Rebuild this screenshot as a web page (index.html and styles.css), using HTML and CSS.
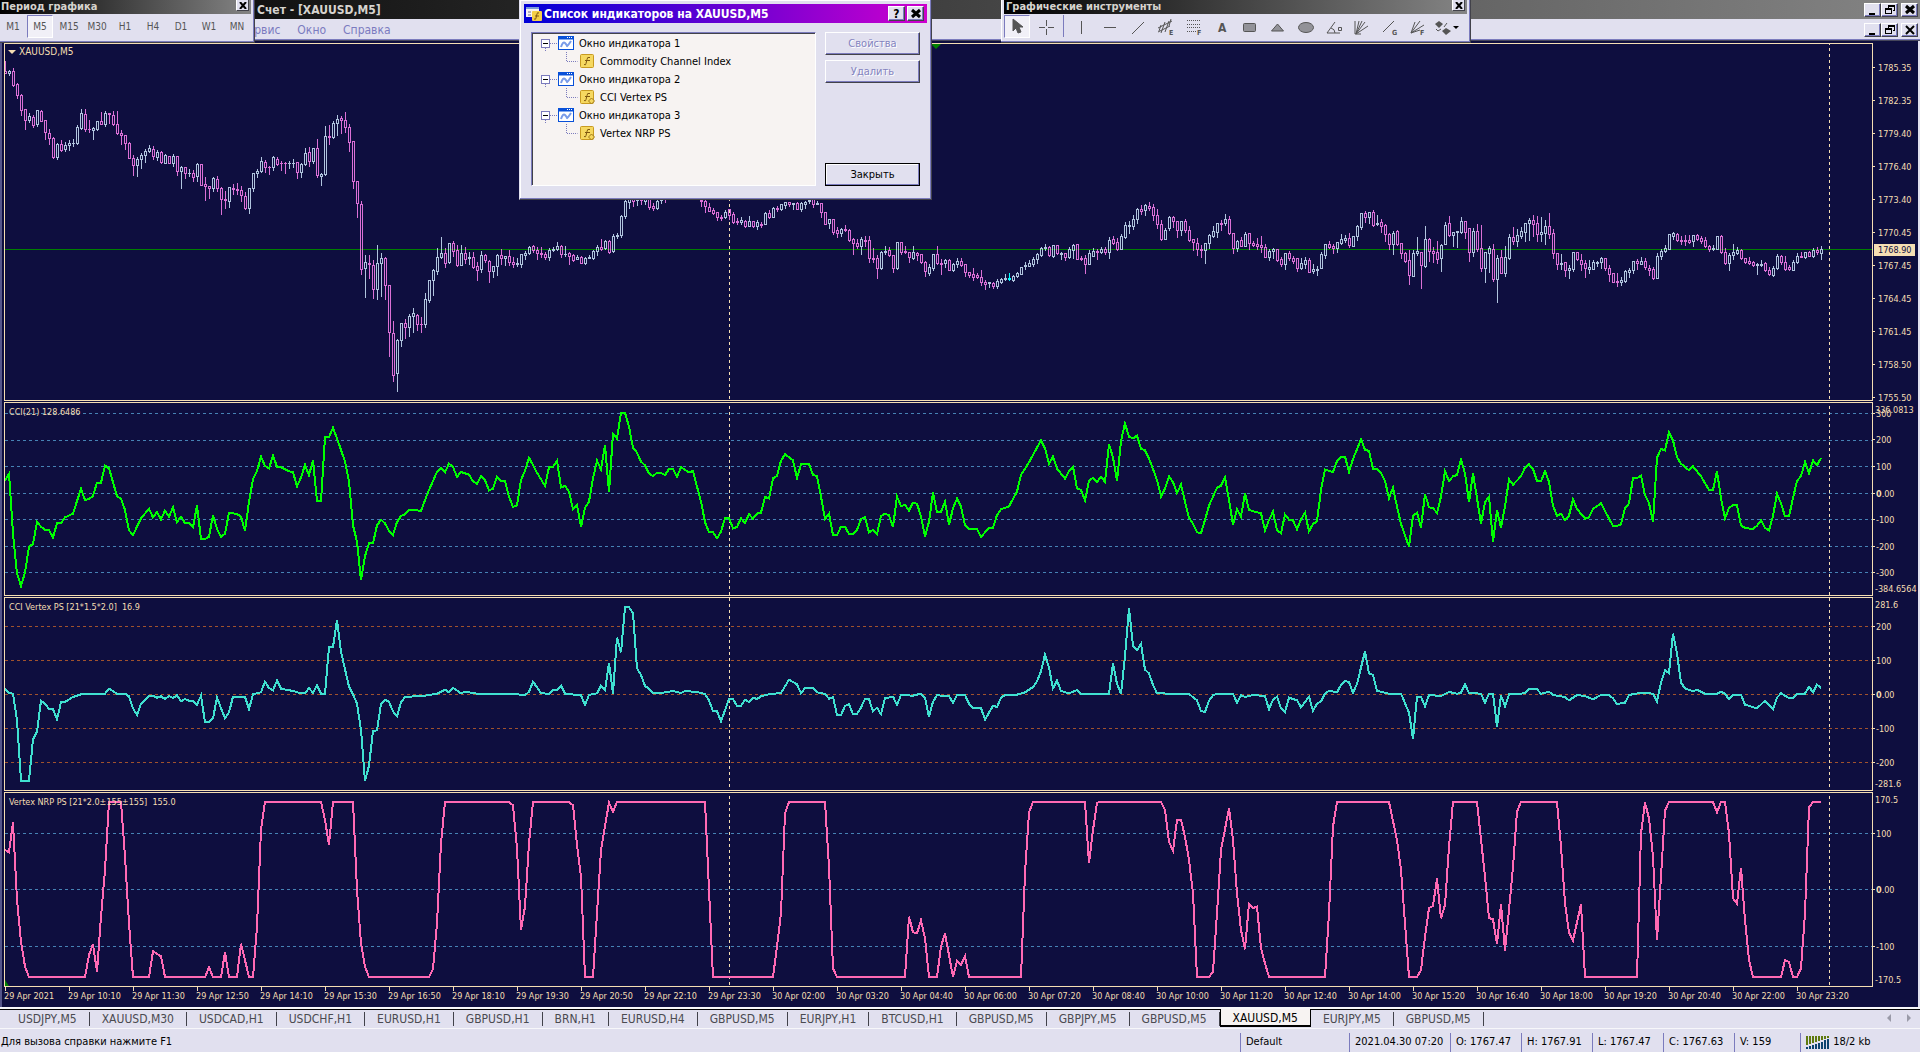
FILE: index.html
```html
<!DOCTYPE html>
<html lang="ru">
<head>
  <meta charset="UTF-8">
  <title>Счет - [XAUUSD,M5]</title>
  <meta name="viewport" content="width=device-width, initial-scale=1">
  <link rel="stylesheet" href="styles.css">
</head>
<body>
  <header class="titlebar">
    <h1>Счет - [XAUUSD,M5]</h1>
    <div class="winbuttons">
      <button class="winbtn" aria-label="Свернуть"><svg width="12" height="11"><path d="M2 9h6v2H2z"/></svg></button>
      <button class="winbtn" aria-label="Восстановить"><svg width="12" height="11"><path d="M4 1h7v6H9V6h1V3H5v1H4zM1 4h7v6H1zm1 2v3h5V6z" fill-rule="evenodd"/></svg></button>
      <button class="winbtn last" aria-label="Закрыть"><svg width="12" height="11"><path d="M2 2l8 7M10 2l-8 7" stroke="#000" stroke-width="3"/></svg></button>
    </div>
  </header>

  <nav class="menubar">
    <a href="#">Сервис</a>
    <a href="#">Окно</a>
    <a href="#">Справка</a>
    <div class="winbuttons">
      <button class="winbtn" aria-label="Свернуть окно"><svg width="12" height="11"><path d="M2 9h6v2H2z"/></svg></button>
      <button class="winbtn" aria-label="Восстановить окно"><svg width="12" height="11"><path d="M4 1h7v6H9V6h1V3H5v1H4zM1 4h7v6H1zm1 2v3h5V6z" fill-rule="evenodd"/></svg></button>
      <button class="winbtn last" aria-label="Закрыть окно"><svg width="12" height="11"><path d="M2 2l8 8M10 2l-8 8" stroke="#000" stroke-width="2"/></svg></button>
    </div>
  </nav>

  <main class="chart">
    <section class="pane price">
      <div class="plot">
        <svg id="price" viewBox="0 44 1867 356" preserveAspectRatio="none"></svg>
        <span class="caption symbol">XAUUSD,M5</span>
        <span class="shift"></span>
      </div>
      <div class="axis" id="priceAxis"></div>
    </section>
    <section class="pane">
      <div class="plot">
        <svg id="cci" viewBox="0 9 1867 576" preserveAspectRatio="none"></svg>
        <span class="caption">CCI(21) 128.6486</span>
      </div>
      <div class="axis" id="cciAxis"></div>
    </section>
    <section class="pane">
      <div class="plot">
        <svg id="vertex" viewBox="0 594 1867 576" preserveAspectRatio="none"></svg>
        <span class="caption">CCI Vertex PS [21*1.5*2.0]&nbsp; 16.9</span>
      </div>
      <div class="axis" id="vertexAxis"></div>
    </section>
    <section class="pane nrp">
      <div class="plot">
        <svg id="nrp" viewBox="0 9 1867 579" preserveAspectRatio="none"></svg>
        <span class="caption">Vertex NRP PS [21*2.0±155±155]&nbsp; 155.0</span>
        <span class="corner"></span>
      </div>
      <div class="axis" id="nrpAxis"></div>
    </section>
    <div class="times" id="times"></div>
  </main>

  <nav class="tabs">
    <a href="#">USDJPY,M5</a>
    <a href="#">XAUUSD,M30</a>
    <a href="#">USDCAD,H1</a>
    <a href="#">USDCHF,H1</a>
    <a href="#">EURUSD,H1</a>
    <a href="#">GBPUSD,H1</a>
    <a href="#">BRN,H1</a>
    <a href="#">EURUSD,H4</a>
    <a href="#">GBPUSD,M5</a>
    <a href="#">EURJPY,H1</a>
    <a href="#">BTCUSD,H1</a>
    <a href="#">GBPUSD,M5</a>
    <a href="#">GBPJPY,M5</a>
    <a href="#">GBPUSD,M5</a>
    <a href="#" class="active">XAUUSD,M5</a>
    <a href="#">EURJPY,M5</a>
    <a href="#">GBPUSD,M5</a>
    <div class="scroll">
      <svg width="32" height="10"><path d="M7 1v8L3 5zM23 1v8l4-4z" fill="#9a9aa8"/></svg>
    </div>
  </nav>

  <footer class="status">
    <span class="hint">Для вызова справки нажмите F1</span>
    <span class="wide">Default</span>
    <span class="date">2021.04.30 07:20</span>
    <span>O: 1767.47</span>
    <span>H: 1767.91</span>
    <span>L: 1767.47</span>
    <span>C: 1767.63</span>
    <span class="volume">V: 159</span>
    <span class="traffic">
      <svg width="24" height="14">
        <path d="M1 1v9M4 1v8M7 1v7M10 1v6M13 1v5M16 1v4M19 1v3M22 1v2" stroke="#5f7a10" stroke-width="2"/>
        <path d="M1 12v2M4 11v3M7 10v4M10 9v5M13 8v6M16 7v7M19 5v9M22 4v10" stroke="#0c4470" stroke-width="2"/>
      </svg>
      18/2 kb
    </span>
  </footer>

  <!-- floating toolbars -->
  <div class="toolbar periods">
    <div class="toolbar-title">Период графика<button class="closebtn" aria-label="Закрыть панель"><svg width="8" height="7"><path d="M1 0l6 7M7 0L1 7" stroke="#000" stroke-width="2"/></svg></button></div>
    <div class="tools">
      <button>M1</button>
      <button class="pressed">M5</button>
      <button>M15</button>
      <button>M30</button>
      <button>H1</button>
      <button>H4</button>
      <button>D1</button>
      <button>W1</button>
      <button>MN</button>
    </div>
  </div>

  <div class="toolbar drawing">
    <div class="toolbar-title">Графические инструменты<button class="closebtn" aria-label="Закрыть панель"><svg width="8" height="7"><path d="M1 0l6 7M7 0L1 7" stroke="#000" stroke-width="2"/></svg></button></div>
    <div class="tools">
      <button class="pressed" aria-label="Курсор"><svg viewBox="0 0 20 16"><path d="M6 0v12l3-3 2 5 3-1-2-5h4z" fill="#555"/></svg></button>
      <button aria-label="Перекрестие"><svg viewBox="0 0 20 16"><path d="M3 8.500h6M12 8.500h6M10.500 1v6M10.500 10v6"/></svg></button>
      <i class="divider"></i>
      <button aria-label="Вертикальная линия"><svg viewBox="0 0 20 16"><path d="M9.500 2v13"/></svg></button>
      <button aria-label="Горизонтальная линия"><svg viewBox="0 0 20 16"><path d="M4 8.500h12"/></svg></button>
      <button aria-label="Трендовая линия"><svg viewBox="0 0 20 16"><path d="M4 15L16 3"/></svg></button>
      <button aria-label="Равноудаленный канал"><svg viewBox="0 0 20 16"><path d="M2 9l14-7M2 13l12-6M5 14L9 3M9 13l4-11M13 7l2-7M3 12l2-6"/><text x="13" y="16">E</text></svg></button>
      <button aria-label="Линии Фибоначчи"><svg viewBox="0 0 20 16"><path d="M3 1.500h14M3 5.500h14M3 8.500h14M3 12.500h9" stroke-dasharray="1 1"/><text x="13" y="16">F</text></svg></button>
      <button aria-label="Текст"><svg viewBox="0 0 20 16"><text x="6" y="13" class="letter">A</text></svg></button>
      <button aria-label="Прямоугольник"><svg viewBox="0 0 20 16"><rect x="3.500" y="4.500" width="12" height="8" rx="1" fill="#929298"/></svg></button>
      <button aria-label="Треугольник"><svg viewBox="0 0 20 16"><path d="M3.500 12L9.500 5l6 7z" fill="#929298"/></svg></button>
      <button aria-label="Эллипс"><svg viewBox="0 0 20 16"><ellipse cx="10" cy="8.500" rx="7.500" ry="5" fill="#929298"/></svg></button>
      <button aria-label="Угол"><svg viewBox="0 0 20 16"><path d="M11 3L3 14h13M7 9q4 1 4 5M14.500 8.500h3v3h-3z"/></svg></button>
      <button aria-label="Веер"><svg viewBox="0 0 20 16"><path d="M3 2v13h6M4 15L7 2M4 15L10 2M4 15L13 3M4 15l12-8"/></svg></button>
      <button aria-label="Линия Ганна"><svg viewBox="0 0 20 16"><path d="M3 13L14 2"/><text x="12" y="16">G</text></svg></button>
      <button aria-label="Веер Фибоначчи"><svg viewBox="0 0 20 16"><path d="M3 14L7 3M3 14L12 2M3 14l13-8M3 14l9-3"/><text x="12" y="16">F</text></svg></button>
      <button class="arrows" aria-label="Стрелки"><svg viewBox="0 0 28 16"><path d="M5 2l4 3-4 4-4-4z" fill="#555" stroke="none"/><path d="M12 9l5 3-5 4-4-4z" fill="#555" stroke="none"/><path d="M2 10l2 2 3-2M10 8l3-4"/><path d="M19 7h6l-3 3z" fill="#000" stroke="none"/></svg></button>
    </div>
  </div>

  <div class="dialog" role="dialog" aria-label="Список индикаторов">
    <div class="dialog-title">
      <svg width="16" height="14">
        <rect width="13" height="10" fill="#f7f3f2"/>
        <path d="M0 1h13" stroke="#7b9bd8" stroke-width="2"/>
        <path d="M2 5h3M2 8h3" stroke="#6a6a90"/>
        <rect x="6" y="4" width="10" height="10" rx="1" fill="#f4cf48"/>
        <path d="M13 6q-2-1-2 1l-1 4q0 2-2 1M9 9h4" stroke="#805810" fill="none"/>
      </svg>
      <h2>Список индикаторов на XAUUSD,M5</h2>
      <button class="winbtn" aria-label="Справка">?</button>
      <button class="winbtn" aria-label="Закрыть диалог"><svg width="12" height="11"><path d="M2 2l8 7M10 2l-8 7" stroke="#000" stroke-width="3"/></svg></button>
    </div>
    <div class="dialog-body">
      <ul class="tree" id="tree"></ul>
      <div class="actions">
        <button disabled>Свойства</button>
        <button disabled>Удалить</button>
        <button class="default">Закрыть</button>
      </div>
    </div>
  </div>

  <script src="chart.js"></script>
</body>
</html>
```

FILE: styles.css
```css
* {
  box-sizing: border-box;
}
body {
  margin: 0;
  height: 100vh;
  overflow: hidden;
  display: flex;
  flex-direction: column;
  background: #e1e0ef;
  color: #000;
  font-family: Tahoma, "DejaVu Sans Condensed", "DejaVu Sans", sans-serif;
  font-size: 11px;
}
button {
  font: inherit;
  padding: 0;
  border: 0;
  background: #e1e0ef;
  color: #000;
}
a {
  color: inherit;
  text-decoration: none;
}
h1, h2 {
  margin: 0;
}

/* application title and menu */
.titlebar {
  display: flex;
  align-items: center;
  height: 19px;
  padding-left: 257px;
  background: linear-gradient(90deg, #000, #848484);
}
.titlebar h1 {
  font-size: 12px;
  color: #d6d3ce;
}
.menubar {
  display: flex;
  align-items: center;
  height: 22px;
  padding-left: 240px;
  gap: 17px;
  font-size: 12px;
  color: #7b7bc0;
  border-bottom: 1px solid #45455a;
  box-shadow: inset 0 -1px #7b7bbd;
}
.winbuttons {
  display: flex;
  margin-left: auto;
  padding-right: 2px;
}
.winbtn {
  display: flex;
  align-items: center;
  justify-content: center;
  width: 17px;
  height: 14px;
  font-size: 12px;
  font-weight: bold;
  border: 1px solid;
  border-color: #fff #42424a #42424a #fff;
  box-shadow: inset -1px -1px #7b7bbd;
}
.winbtn.last {
  margin-left: 3px;
}

/* chart window */
.chart {
  flex: 1;
  min-height: 0;
  display: flex;
  flex-direction: column;
  padding: 2px 0 0 2px;
  border-left: 2px solid #55558a;
  border-right: 2px solid #e1e0ef;
  background: #0e0e3f;
  color: #f5deb3;
  font-size: 9px;
}
.pane {
  flex: 194 1 0;
  min-height: 0;
  display: grid;
  grid-template-columns: 1fr 45px;
  margin-bottom: 1px;
}
.price {
  flex-grow: 358;
}
.nrp {
  flex-grow: 195;
  margin-bottom: 0;
}
.plot {
  position: relative;
  min-height: 0;
  border: 1px solid #f5deb3;
}
.plot svg {
  display: block;
  width: 100%;
  height: 100%;
  position: absolute;
  shape-rendering: crispEdges;
}
.plot path {
  fill: none;
  vector-effect: non-scaling-stroke;
}
.caption {
  position: absolute;
  left: 4px;
  top: 3px;
  line-height: 12px;
}
.symbol {
  left: 14px;
  top: 2px;
  font-size: 10px;
}
.symbol::before {
  content: "";
  position: absolute;
  left: -11px;
  top: 4px;
  border: 4px solid transparent;
  border-top-color: #f5deb3;
  border-bottom: 0;
}
.shift {
  position: absolute;
  left: 50%;
  top: 0;
  margin-left: -8px;
  border: 5px solid transparent;
  border-top-color: #008000;
  border-bottom: 0;
}
.corner {
  position: absolute;
  left: 0;
  bottom: 0;
  border-left: 4px solid #008000;
  border-top: 6px solid transparent;
}
.up { stroke: #b0c4de; }
.down { stroke: #da70d6; }
.doji { stroke: #00ffff; }
.bid { stroke: #008000; }
.period { stroke: #f5deb3; stroke-dasharray: 3 3; }
.level { stroke: #4682b4; stroke-dasharray: 3 3; }
.level.brown { stroke: #a0522d; }
.green { stroke: #00ff00; stroke-width: 2; }
.aqua { stroke: #40e0d0; stroke-width: 2; }
.pink { stroke: #ff69b4; stroke-width: 2; }

.axis {
  position: relative;
}
.axis span {
  position: absolute;
  left: 3px;
  line-height: 12px;
  margin-top: -6px;
}
.axis .tick::before {
  content: "";
  position: absolute;
  left: -3px;
  top: 5px;
  width: 2px;
  height: 1px;
  background: #f5deb3;
}
.axis .limit {
  left: 2px;
}
#priceAxis span {
  left: 5px;
}
#priceAxis .tick::before {
  left: -5px;
}
#priceAxis .bidtag {
  left: 1px;
  width: 41px;
  padding-left: 4px;
  background: #f5deb3;
  color: #0e0e3f;
}
.times {
  display: flex;
  height: 20px;
  overflow: hidden;
}
.times span {
  flex: 0 0 64px;
  padding-top: 4px;
  line-height: 11px;
  white-space: nowrap;
  background: linear-gradient(#f5deb3, #f5deb3) 1px 0 / 1px 4px no-repeat;
}

/* chart tabs */
.tabs {
  display: flex;
  height: 22px;
  padding-top: 3px;
  padding-left: 6px;
  border-top: 2px solid #f7f7fa;
  border-bottom: 1px solid #f7f7fa;
  background: linear-gradient(#000, #000) 0 0 / 100% 1px no-repeat;
  font-size: 12px;
  color: #4a4a50;
}
.tabs a {
  display: flex;
  align-items: center;
  padding: 0 12px;
  height: 14px;
  border-right: 1px solid #42424a;
}
.tabs .active {
  height: 18px;
  margin-top: -3px;
  padding-top: 2px;
  color: #000;
  background: #f7f3f2;
  border: 1px solid #000;
  border-top: 0;
  border-bottom-width: 2px;
}
.scroll {
  margin-left: auto;
  padding-right: 4px;
}

/* status bar */
.status {
  display: flex;
  align-items: flex-end;
  height: 23px;
}
.status span {
  flex: 0 0 71px;
  height: 19px;
  line-height: 18px;
  padding-left: 5px;
  border-left: 1px solid #7b7bbd;
  white-space: nowrap;
}
.status .hint {
  flex: 1;
  padding-left: 1px;
  border: 0;
}
.status .wide {
  flex-basis: 109px;
}
.status .date {
  flex-basis: 101px;
}
.status .volume {
  flex-basis: 66px;
}
.status .traffic {
  flex-basis: 120px;
}
.traffic svg {
  vertical-align: middle;
}

/* floating toolbars */
.toolbar {
  position: absolute;
  top: -1px;
  height: 44px;
  padding: 1px 3px 0;
  background: #e1e0ef;
  border: solid #42424a;
  border-width: 0 1px 1px 0;
  box-shadow: inset -1px -1px #7b7bbd, inset 1px 0 #fff;
}
.periods {
  left: -4px;
  width: 259px;
}
.drawing {
  left: 1001px;
  width: 470px;
}
.toolbar-title {
  position: relative;
  height: 14px;
  line-height: 14px;
  padding-left: 2px;
  font-weight: bold;
  color: #d6d3ce;
  background: linear-gradient(90deg, #000, #848484);
  margin-bottom: 1px;
}
.closebtn {
  position: absolute;
  right: 2px;
  top: -1px;
  width: 13px;
  height: 12px;
  display: flex;
  align-items: center;
  justify-content: center;
  border: 1px solid;
  border-color: #fff #42424a #42424a #fff;
}
.tools {
  display: flex;
}
.tools button {
  width: 28px;
  height: 23px;
  font-size: 10px;
  color: #555;
  background-clip: padding-box;
}
.tools .pressed {
  width: 26px;
  margin-right: 2px;
  background: #f1f0f7;
  border: 1px solid;
  border-color: #7b7bbd #fff #fff #7b7bbd;
}
.tools svg {
  width: 20px;
  height: 16px;
  display: block;
  margin: 0 auto;
  overflow: visible;
  fill: none;
  stroke: #555;
}
.tools .arrows {
  width: 32px;
}
.tools .arrows svg {
  width: 28px;
}
.tools text {
  font-size: 7px;
  font-weight: bold;
  fill: #555;
  stroke: none;
}
.tools .letter {
  font-size: 12px;
}
.divider {
  width: 8px;
  height: 22px;
  border-left: 1px solid #7b7bbd;
  margin-left: 3px;
  margin-right: -3px;
}

/* indicator list dialog */
.dialog {
  position: absolute;
  left: 519px;
  top: -1px;
  width: 413px;
  height: 201px;
  padding: 4px;
  background: #e1e0ef;
  border: 1px solid;
  border-color: #fff #42424a #42424a #e1e0ef;
  box-shadow: inset -1px -1px #7b7bbd, inset 1px 1px #fff;
}
.dialog-title {
  display: flex;
  align-items: center;
  height: 19px;
  padding: 0 3px 0 2px;
  gap: 2px;
  background: linear-gradient(90deg, #0000d6, #ce00ce);
}
.dialog-title h2 {
  flex: 1;
  font-size: 12px;
  color: #fff;
}
.dialog-title .winbtn {
  height: 15px;
}
.dialog-body {
  display: flex;
  gap: 9px;
  padding: 9px 7px 0;
  height: 163px;
}
.tree {
  flex: 1;
  margin: 0;
  padding: 1px 0 0 9px;
  list-style: none;
  background: #f7f3f2;
  border: 1px solid;
  border-color: #7b7bbd #fff #fff #7b7bbd;
  box-shadow: inset 1px 1px #42424a;
}
.tree li {
  display: flex;
  align-items: center;
  height: 18px;
  gap: 5px;
}
.tree .child {
  padding-left: 22px;
}
.tree svg {
  display: block;
}
.actions {
  width: 95px;
  display: flex;
  flex-direction: column;
  gap: 5px;
}
.actions button {
  height: 23px;
  border: 1px solid;
  border-color: #fff #42424a #42424a #fff;
  box-shadow: inset -1px -1px #7b7bbd;
}
.actions button:disabled {
  color: #8484c0;
  text-shadow: 1px 1px #fff;
}
.actions .default {
  margin-top: auto;
  border-color: #000;
  box-shadow: inset -1px -1px #7b7bbd, inset 1px 1px #fff;
}
```

FILE: chart.js
```js
const STEP = 4; // pixels per bar

// u = bull, d = bear, c = doji; high, body top, body bottom, low
const candles = `
d61,71,73,73 u70,71,73,75 d68,71,85,86 d83,84,95,98 d94,95,110,115 d109,109,120,129 u113,116,120,122 d115,117,125,127 u110,110,124,126 d110,111,121,121
d120,120,132,139 d129,133,138,144 d137,138,157,158 u143,144,157,159 d140,144,150,151 u142,145,149,151 u140,143,145,150 u139,143,143,146 u125,127,143,144 u109,113,128,129
d109,114,129,131 d120,129,129,132 u127,128,130,139 u121,121,129,130 d112,121,124,124 u111,113,124,126 d113,113,114,123 d111,115,124,125 d111,124,133,134 d130,133,135,144
d135,135,143,149 d142,143,158,158 d155,158,165,175 u157,159,165,176 u153,155,159,168 u149,151,155,162 u145,148,151,152 d146,149,156,159 u150,152,157,160 d151,152,162,163
u154,155,163,163 d156,156,163,163 u154,156,163,166 d156,156,171,175 u166,167,171,188 d167,167,173,178 u169,173,173,176 d170,173,177,181 u163,164,176,181 d164,164,185,185
d177,184,186,200 d186,186,188,198 u177,178,188,191 d176,179,188,191 d187,188,199,214 d191,199,200,208 u187,187,201,207 d184,188,189,194 d183,189,190,194 d186,190,195,201
d192,196,208,209 u188,188,208,213 u173,173,188,191 u169,171,173,177 u157,161,171,172 d160,162,167,172 d166,167,167,174 u156,157,167,170 d157,159,164,165 d161,163,163,170
d162,163,163,173 u161,163,163,168 u159,163,163,167 d162,162,172,178 u163,164,172,177 u148,153,164,165 d147,152,161,166 u148,148,161,163 d139,148,175,177 u173,174,176,185
u126,136,174,175 d125,136,137,144 u121,123,137,138 u115,119,123,135 d116,118,120,133 d112,120,127,132 d124,127,142,151 d141,141,181,188 d181,181,203,217 d201,204,269,274
u255,262,268,297 d255,263,264,278 d260,265,289,298 u245,263,289,299 u253,258,263,296 d257,258,285,299 d285,285,332,356 d321,333,375,381 u339,340,373,391 u323,323,340,346
d319,323,327,338 u314,316,327,336 u308,313,316,332 d314,315,324,330 d317,324,324,332 u293,299,324,327 u280,280,300,302 u269,270,280,295 u248,257,271,274 u237,253,257,258
d248,253,263,267 u243,243,262,263 d241,243,251,256 d245,250,265,266 u245,253,265,265 d247,253,259,263 u252,257,258,264 d252,257,267,268 d262,266,270,280 u251,255,269,272
d254,255,260,262 d260,261,271,282 u266,266,271,277 u254,255,266,275 d249,255,258,264 u256,256,258,265 d250,256,262,265 d257,262,264,267 u258,263,264,266 u254,254,264,267
u251,253,255,259 u246,247,253,254 d245,246,250,252 d247,250,253,259 d247,253,254,257 d252,254,257,259 u248,250,257,260 u247,249,250,251 u242,246,249,250 d245,246,254,257
u246,254,254,256 d252,253,256,264 d254,255,260,261 u255,257,259,259 d256,257,263,263 u257,258,263,264 u255,257,258,258 u250,251,258,259 u245,247,251,255 d239,247,249,250
u240,241,248,249 d240,241,252,253 u234,236,251,252 u233,235,236,238 u215,216,235,237 u200,201,216,218 u196,199,202,208 d195,198,201,206 u195,198,200,205 d196,199,200,204
u196,199,201,204 d198,199,207,209 d203,206,208,210 u199,201,208,209 u192,199,200,203 d190,196,198,202 u186,188,196,197 u182,184,188,190 d181,184,188,191 u179,182,188,190
u176,180,182,186 d177,180,186,190 d182,186,190,194 d186,190,196,198 d190,200,201,206 d199,201,206,212 d203,207,211,211 d208,210,213,214 d212,212,217,220 d215,217,218,220
u210,212,217,218 d209,209,215,219 d212,214,222,223 d218,221,222,224 u217,220,222,224 d220,221,226,227 u216,221,226,226 d221,221,226,227 u220,222,226,229 d222,224,225,227
u212,213,224,224 d210,213,217,218 u207,208,217,217 d206,208,209,211 u204,204,209,210 u202,202,205,208 d202,202,204,206 u203,203,204,209 d202,203,209,209 u202,203,209,211
u201,202,204,208 u197,200,201,203 d196,199,204,207 u201,203,204,204 d203,203,212,217 d212,212,224,224 u219,219,223,228 d219,219,232,234 d227,230,233,237 u228,229,233,236
d225,229,230,231 d229,230,240,241 d238,239,243,254 d239,243,246,248 u237,239,246,254 d236,240,241,246 d236,240,258,262 d248,258,259,262 d255,258,268,278 u251,252,268,269
u246,251,252,254 d247,250,255,256 d255,255,268,272 u242,242,268,269 d242,242,252,254 d246,251,252,253 d252,252,257,262 u246,252,258,259 d252,253,255,260 d254,254,262,263
d261,262,271,276 u264,267,273,275 u254,254,268,270 d246,254,263,264 d259,263,264,274 u259,260,263,267 d259,260,270,270 u263,264,270,271 u258,261,264,267 d258,261,265,266
d264,264,272,276 d272,272,275,277 d268,274,277,280 d273,275,277,278 d270,277,282,285 d280,282,284,289 u282,282,283,287 d282,283,286,288 u279,281,286,288 u278,279,282,283
u274,278,279,280 c273,278,279,280 u275,276,280,281 u272,273,276,277 u267,267,274,274 u262,265,266,269 u260,263,266,266 u257,259,264,266 u253,254,259,263 u247,248,255,256
u244,247,248,250 d246,247,255,256 u245,245,256,257 d245,245,253,254 u252,253,254,259 d253,253,257,260 u247,249,257,258 u244,245,250,258 d244,244,259,259 d256,258,259,260
d255,258,264,273 u250,253,264,264 u248,251,256,256 d249,251,252,259 u247,249,252,253 d247,249,252,254 u237,240,252,258 d236,239,243,244 d238,242,249,250 u234,236,249,249
u222,225,237,238 u221,225,226,233 u215,219,226,229 u208,209,219,223 d205,209,211,214 u204,205,210,215 d202,206,208,210 d204,207,215,220 d209,215,224,228 d220,224,239,240
u228,230,239,239 u216,217,228,230 d216,217,221,227 d221,221,230,237 u221,221,230,235 d219,221,230,232 d226,230,240,241 d239,239,242,250 d238,243,249,255 d245,249,250,257
u243,243,250,263 u234,235,243,248 u226,231,236,237 u223,223,232,237 d220,223,224,230 u214,219,223,225 d216,219,233,234 d233,233,248,253 u240,241,248,251 d237,240,246,246
u232,234,246,246 d233,233,243,249 d241,243,245,246 d238,244,246,249 d236,245,247,252 d244,247,257,257 u249,251,257,260 u248,249,251,258 d249,249,260,261 d257,259,264,266
u253,253,264,269 d251,253,258,260 d256,258,261,263 d258,258,268,271 u258,263,268,269 u257,260,264,268 d258,260,272,272 u264,269,271,273 u266,269,270,275 u252,254,268,268
u244,244,255,258 d241,244,247,248 d244,246,248,253 u242,242,248,252 u234,239,243,244 u235,238,240,242 d233,238,245,247 u236,236,246,246 u225,226,236,240 u213,213,227,229
d211,213,217,222 u212,212,217,223 d210,212,225,226 u215,223,224,225 d219,222,226,232 d224,225,234,241 d233,234,244,249 u231,233,244,254 d230,231,244,245 d243,243,253,258
d252,253,261,262 d250,260,275,284 u250,253,276,276 u237,251,253,255 d252,252,265,288 u226,239,266,267 d238,239,251,261 d247,251,253,262 d241,252,259,263 u244,245,258,271
u222,225,244,244 d216,223,235,236 u232,232,235,246 u231,231,232,247 u217,221,232,233 d221,221,232,238 d228,228,252,261 u228,231,252,256 d224,231,249,251 d225,248,268,271
u252,252,268,282 u246,248,253,272 d244,249,279,281 u255,258,279,302 d250,257,273,273 u246,257,273,276 u234,237,258,259 d227,237,241,244 u229,235,241,246 u227,231,236,238
u223,223,232,241 u218,220,223,240 d215,220,224,236 d216,223,234,241 u217,232,234,241 u220,226,233,244 d213,226,234,238 d229,233,253,258 d253,253,264,269 u254,263,264,269
d262,262,270,276 u265,268,270,278 u252,252,269,271 d252,252,259,260 d254,260,264,270 d260,263,268,277 u260,267,269,273 u260,262,269,269 u261,262,263,266 u257,258,262,268
d258,258,268,270 d265,268,274,281 d273,273,282,282 d273,281,282,286 u277,280,282,285 u270,271,281,282 u268,270,272,277 u261,261,270,273 d259,261,263,269 u257,261,264,264
d258,261,267,269 d265,268,270,275 d267,269,278,279 u253,256,278,278 u249,251,256,259 u245,248,251,252 u234,234,249,249 u232,233,236,239 d233,234,240,241 d236,240,241,244
d235,240,241,245 d235,240,242,243 u235,235,241,246 d234,235,239,240 d236,238,241,243 d237,240,246,247 d245,246,249,251 u245,248,249,250 u236,236,249,249 d235,236,252,253
d248,252,263,264 u253,255,263,270 u244,252,255,259 u247,250,253,254 d249,250,258,259 d258,258,262,263 d257,261,263,264 d261,262,265,266 u263,264,265,274 u260,264,265,266
d262,263,270,271 d267,270,274,275 u266,268,275,276 u254,256,268,269 d255,256,262,264 d256,262,269,270 d265,267,269,270 u260,262,270,270 u253,256,262,263 d252,256,257,257
u252,252,257,258 d251,252,256,256 u248,250,256,257 d247,250,252,254 u246,249,253,259`;

// bar,level pairs
const cci = `0,241 1,221 2,400 3,520 4,558 5,518 6,440 7,432 8,366 9,380 10,390 11,390 12,412 13,370 14,370 15,352 17,341 19,266 20,300 21,297 22,288 23,248 24,248 25,197 26,205
28,289 29,296 30,330 31,391 32,405 34,355 36,326 37,352 38,336 39,358 40,332 41,350 42,322 43,367 44,350 45,369 46,370 47,382 48,316 49,417 50,417 51,410 52,346 53,387 54,411 55,401
56,338 58,342 59,350 60,393 61,305 62,237 63,213 64,170 65,198 66,205 67,167 68,200 69,202 71,214 72,217 73,259 74,233 75,194 76,226 77,180 78,303 79,303 80,111 81,111 82,83 83,115
85,185 86,245 87,376 88,425 89,541 90,468 91,430 92,430 93,376 94,359 95,370 96,393 97,405 98,366 99,348 100,343 101,330 102,329 104,333 105,300 106,270 107,243 108,215 109,203
110,217 111,191 112,201 113,231 114,216 116,224 117,244 118,251 119,229 120,241 121,271 122,266 123,230 124,243 125,243 126,290 127,321 128,316 129,240 130,212 131,173 132,195
133,218 135,258 136,202 137,200 138,182 139,262 140,258 141,275 142,328 143,315 144,381 145,323 146,305 147,235 148,182 149,208 150,134 151,277 152,102 153,116 154,38 155,38
156,80 157,143 158,158 159,185 160,196 161,220 162,229 163,218 164,219 165,225 166,207 167,207 168,230 169,202 171,217 172,213 173,260 174,305 175,366 176,397 177,397 178,415
179,395 180,354 181,354 182,385 183,381 184,355 185,369 186,343 187,356 188,341 189,338 190,291 191,295 192,235 193,228 194,182 195,163 197,181 198,234 199,193 201,193 202,224
203,229 204,290 205,357 206,341 207,405 208,405 209,380 210,380 211,402 212,402 213,390 214,357 215,352 216,397 217,390 218,403 219,348 220,341 221,346 222,381 223,290 224,318
225,315 226,332 227,308 228,311 229,350 230,409 231,365 232,278 233,336 234,336 235,305 236,374 237,325 238,296 239,320 240,375 241,386 243,387 244,411 246,383 247,383 248,345
249,328 251,319 253,275 254,225 256,187 257,165 259,121 260,145 261,192 262,170 263,206 265,236 266,213 267,200 268,265 269,270 270,301 271,242 272,233 273,247 274,230 275,246
276,133 277,172 278,242 279,123 280,70 281,110 282,115 283,107 284,146 285,151 286,175 288,240 289,289 290,265 291,229 292,246 293,279 294,254 295,305 296,353 297,371 298,397
299,400 300,360 301,317 303,263 304,257 305,233 306,300 307,374 308,328 309,349 310,280 311,330 313,337 314,340 315,391 316,360 317,335 318,390 319,400 320,344 321,359 322,361
323,388 324,358 325,338 326,394 327,372 328,364 329,270 330,209 332,216 333,184 334,170 335,170 336,216 337,177 339,118 340,149 341,153 342,206 343,207 344,219 345,243 346,295
347,263 348,320 349,372 351,440 352,347 353,338 354,383 355,282 356,322 357,324 358,339 359,290 360,214 361,243 362,229 363,225 364,179 365,220 366,307 367,220 368,295 369,371
370,306 371,290 372,425 373,331 374,383 375,320 376,238 377,254 379,229 380,203 381,193 382,207 383,243 384,243 385,214 386,245 387,317 388,347 389,341 390,361 391,347 392,298
393,327 395,356 396,352 397,327 399,310 402,378 403,378 404,373 405,325 406,310 407,235 408,234 409,227 410,285 411,309 412,367 413,173 414,147 415,151 416,97 417,121 418,172
419,191 421,211 422,199 424,229 426,270 427,270 428,214 429,295 430,356 431,324 432,315 433,315 434,376 435,384 437,387 438,377 439,361 440,384 441,391 442,348 443,281 444,310
445,349 446,349 447,294 448,243 449,228 450,186 451,220 452,181 453,196 454,174`;

const vertex = `0,866 1,879 2,881 3,960 4,1142 6,1142 7,1018 8,995 9,902 10,911 11,927 12,927 13,958 14,907 15,906 17,891 19,883 25,881 26,866 28,881 30,881 31,889 32,925 33,945 34,911
36,887 37,887 38,893 39,889 40,897 41,888 42,894 43,886 44,904 45,897 46,902 47,902 48,914 49,887 50,967 51,966 52,955 53,893 55,955 56,937 57,890 60,891 61,927 62,883 64,877
65,845 66,864 67,871 68,842 69,866 72,873 74,880 75,880 76,864 77,879 78,855 79,881 80,881 81,741 82,741 83,660 84,755 86,860 87,883 88,911 89,990 90,1143 91,1097 92,993 93,991
94,912 95,899 96,905 97,934 98,949 99,907 100,891 105,887 108,881 110,869 111,877 112,863 114,880 115,875 118,881 127,881 130,886 131,875 132,845 134,879 136,882 137,870 138,871
139,857 140,881 144,886 145,915 146,885 148,880 149,857 150,871 151,788 152,881 153,713 154,757 155,622 156,621 157,640 158,805 159,825 160,858 161,866 162,879 164,879 167,873
169,879 170,873 173,876 175,882 176,901 177,933 178,934 179,964 181,897 182,897 183,918 184,918 185,899 186,906 187,893 188,897 189,889 191,883 194,879 196,839 198,853 199,880
200,864 202,863 203,877 205,882 206,896 207,891 208,945 209,945 210,918 211,913 212,942 213,942 214,923 215,896 216,897 217,934 218,923 219,943 220,895 222,890 223,915 224,885
227,887 229,881 230,893 231,951 232,905 233,886 236,888 237,909 238,885 240,885 241,911 242,923 244,924 245,959 247,917 248,921 249,893 250,885 253,884 255,877 257,861 258,844
259,814 260,763 261,803 262,865 263,842 264,873 266,880 268,870 269,881 276,881 277,790 278,852 279,881 280,770 281,623 282,737 283,751 284,732 285,809 286,820 287,855 288,880
296,882 298,901 299,933 300,936 301,902 302,886 303,881 307,881 308,909 309,886 310,891 312,885 315,888 316,928 317,899 318,890 319,925 320,936 321,893 323,901 324,922 326,890
327,933 328,911 329,904 330,881 331,872 333,877 334,855 335,842 336,847 337,878 338,852 340,754 341,820 342,825 343,872 346,881 349,881 351,938 352,1017 353,890 354,890 355,919
356,885 359,888 361,876 363,881 364,878 365,853 366,879 369,881 370,908 371,881 372,881 373,980 374,886 375,919 376,883 380,880 381,866 383,868 384,881 386,875 387,885 390,891
391,901 393,885 395,888 397,898 399,885 401,885 402,895 403,912 405,908 406,885 409,878 412,881 413,905 414,847 415,811 416,819 417,701 418,760 419,848 420,865 422,874 423,869
425,881 428,881 429,875 430,881 431,898 432,885 434,885 435,914 438,925 440,902 442,928 443,893 444,880 446,894 447,894 448,881 450,881 451,860 452,877 453,854 454,864`;

const nrp = `0,180 1,187 2,97 3,330 4,455 5,530 6,561 20,561 21,495 22,463 23,545 24,380 25,240 26,36 29,36 30,200 31,400 32,561 36,561 37,484 39,499 40,561 50,561 51,532 52,561 54,561
55,487 56,561 58,561 59,461 61,561 62,561 63,410 64,120 65,36 79,36 80,90 81,165 82,36 87,36 88,300 89,460 90,530 91,561 106,561 107,537 108,400 109,160 110,36 126,36 127,46
128,175 129,420 130,350 131,160 132,36 141,36 142,46 143,165 144,260 145,561 147,561 148,370 149,180 151,38 152,65 153,36 175,36 176,300 177,561 192,561 193,470 194,370 195,70
196,36 205,36 206,230 207,535 208,561 225,561 226,380 227,427 228,430 229,391 230,445 231,561 233,561 234,470 235,430 237,561 238,512 239,525 240,498 241,561 254,561 255,250
256,68 257,36 270,36 271,220 272,120 273,38 274,36 289,36 290,60 291,155 292,182 293,90 294,90 295,140 296,210 297,310 298,561 301,561 302,545 303,370 304,180 306,55 307,150
308,310 309,420 310,478 311,341 312,354 313,350 314,475 315,520 316,561 330,561 331,370 332,110 333,36 346,36 348,150 349,240 350,400 351,561 353,561 354,540 355,440 356,354
357,348 358,265 359,385 360,345 361,170 362,36 368,36 370,260 371,384 372,388 373,463 374,343 375,482 376,360 377,230 378,65 379,36 388,36 389,170 390,340 391,428 392,451
394,343 395,561 408,561 409,130 410,38 411,85 412,200 413,451 414,260 415,62 416,36 427,36 428,67 429,36 430,36 431,130 432,325 433,341 434,233 435,390 436,510 437,561 444,561
445,511 446,516 447,561 448,561 449,535 450,370 451,52 452,36 454,36`;

function addPath(svg, cls, d) {
  const path = document.createElementNS('http://www.w3.org/2000/svg', 'path');
  path.setAttribute('class', cls);
  path.setAttribute('d', d);
  svg.appendChild(path);
}

function addLabels(axisId, top, height, labels) {
  const axis = document.getElementById(axisId);
  labels.forEach(([text, y, cls]) => {
    const span = document.createElement('span');
    span.innerHTML = text;
    span.className = cls || 'tick';
    span.style.top = ((y - top) / height * 100).toFixed(2) + '%';
    axis.appendChild(span);
  });
}

function drawPeriods(svg) {
  addPath(svg, 'period', 'M724.5 0V1200M1824.5 0V1200');
}

function drawCandles() {
  const svg = document.getElementById('price');
  const d = { u: '', d: '', c: '' };
  candles.trim().split(/\s+/).forEach((c, i) => {
    const [high, top, bottom, low] = c.slice(1).split(',').map(Number);
    const x = i * STEP + 0.5;
    d[c[0]] += `M${x} ${high}V${top}M${x} ${bottom + 1}V${low + 1}`;
    d[c[0]] += `M${x - 1.5} ${top + 0.5}H${x + 1.5}`;
    if (bottom > top) {
      d[c[0]] += `M${x - 1.5} ${bottom + 0.5}H${x + 1.5}M${x - 1} ${top}V${bottom}M${x + 1} ${top}V${bottom}`;
    }
  });
  drawPeriods(svg);
  addPath(svg, 'bid', 'M0 249.5H1867');
  addPath(svg, 'up', d.u);
  addPath(svg, 'down', d.d);
  addPath(svg, 'doji', d.c);
}

function drawIndicator(id, data, cls, levels, levelCls) {
  const svg = document.getElementById(id);
  addPath(svg, levelCls, levels.map(y => `M0 ${y}H1867`).join(''));
  drawPeriods(svg);
  addPath(svg, cls, 'M' + data.trim().split(/\s+/).map(p => {
    const [bar, y] = p.split(',').map(Number);
    return `${bar * STEP} ${y}`;
  }).join('L'));
}

drawCandles();
drawIndicator('cci', cci, 'green', [40.5, 121.5, 199.5, 280.5, 358.5, 439.5, 517.5], 'level');
drawIndicator('vertex', vertex, 'aqua', [679.5, 781.5, 883.5, 985.5, 1087.5], 'level brown');
drawIndicator('nrp', nrp, 'pink', [130.5, 298.5, 469.5], 'level');

const zero = '<b>0</b>.00';
const prices = ['1785.35', '1782.35', '1779.40', '1776.40', '1773.40', '1770.45', '1767.45', '1764.45', '1761.45', '1758.50', '1755.50'];
addLabels('priceAxis', 43, 358, prices.map((p, i) => [p, 68 + i * 33]));
addLabels('priceAxis', 43, 358, [['1768.90', 250, 'bidtag']]);
addLabels('cciAxis', 6, 582, [['336.0813', 29, 'limit'], ['300', 42], ['200', 121], ['100', 200], [zero, 281], ['-100', 359], ['-200', 440], ['-300', 518], ['-384.6564', 566, 'limit']]);
addLabels('vertexAxis', 591, 582, [['281.6', 614, 'limit'], ['200', 680], ['100', 782], [zero, 884], ['-100', 986], ['-200', 1088], ['-281.6', 1152, 'limit']]);
addLabels('nrpAxis', 6, 585, [['170.5', 29, 'limit'], ['100', 131], [zero, 299], ['-100', 470], ['-170.5', 569, 'limit']]);

const times = ['29 Apr 2021', '29 Apr 10:10', '29 Apr 11:30', '29 Apr 12:50', '29 Apr 14:10', '29 Apr 15:30', '29 Apr 16:50', '29 Apr 18:10', '29 Apr 19:30', '29 Apr 20:50',
  '29 Apr 22:10', '29 Apr 23:30', '30 Apr 02:00', '30 Apr 03:20', '30 Apr 04:40', '30 Apr 06:00', '30 Apr 07:20', '30 Apr 08:40', '30 Apr 10:00', '30 Apr 11:20',
  '30 Apr 12:40', '30 Apr 14:00', '30 Apr 15:20', '30 Apr 16:40', '30 Apr 18:00', '30 Apr 19:20', '30 Apr 20:40', '30 Apr 22:00', '30 Apr 23:20'];
document.getElementById('times').innerHTML = times.map(t => `<span>${t}</span>`).join('');

const windowIcon = `<svg width="33" height="18"><path d="M4.500 14v4" stroke="#7b7bbd" stroke-dasharray="1 1"/>
  <path d="M9 9.500h7" stroke="#7b7bbd" stroke-dasharray="1 1"/><rect x=".5" y="5.500" width="8" height="8" fill="#fff" stroke="#7b7bbd"/><path d="M2 9.500h5" stroke="#000"/>
  <rect x="17.500" y="2.500" width="15" height="13" fill="#fff" stroke="#0850d8"/><path d="M17 4h16" stroke="#0850d8" stroke-width="3"/><path d="M26 3.500h6" stroke="#fff" stroke-dasharray="1 1"/>
  <path d="M20 13q2-6 4-4t2 3 4-5" fill="none" stroke="#7a9ce8" stroke-width="2"/></svg>`;
const functionIcon = custom => `<svg width="32" height="18"><path d="M3.500 0v9.500h11" fill="none" stroke="#7b7bbd" stroke-dasharray="1 1"/>
  <rect x="17.500" y="2.500" width="13" height="13" rx="1" fill="#f6d860" stroke="#c89a20"/><path d="M27 5.500q-3-1-3 2l-1 4q0 2-2 1M22 8.500h5" fill="none" stroke="#805810"/>
  ${custom ? '<path d="M28.500 10l3 3-3 3-3-3z" fill="#f6d860" stroke="#a07818"/>' : ''}</svg>`;
const tree = [['Окно индикатора 1', 'Commodity Channel Index', false], ['Окно индикатора 2', 'CCI Vertex PS', true], ['Окно индикатора 3', 'Vertex NRP PS', true]];
document.getElementById('tree').innerHTML = tree.map(([name, child, custom]) =>
  `<li>${windowIcon}${name}</li><li class="child">${functionIcon(custom)}${child}</li>`).join('');
```
